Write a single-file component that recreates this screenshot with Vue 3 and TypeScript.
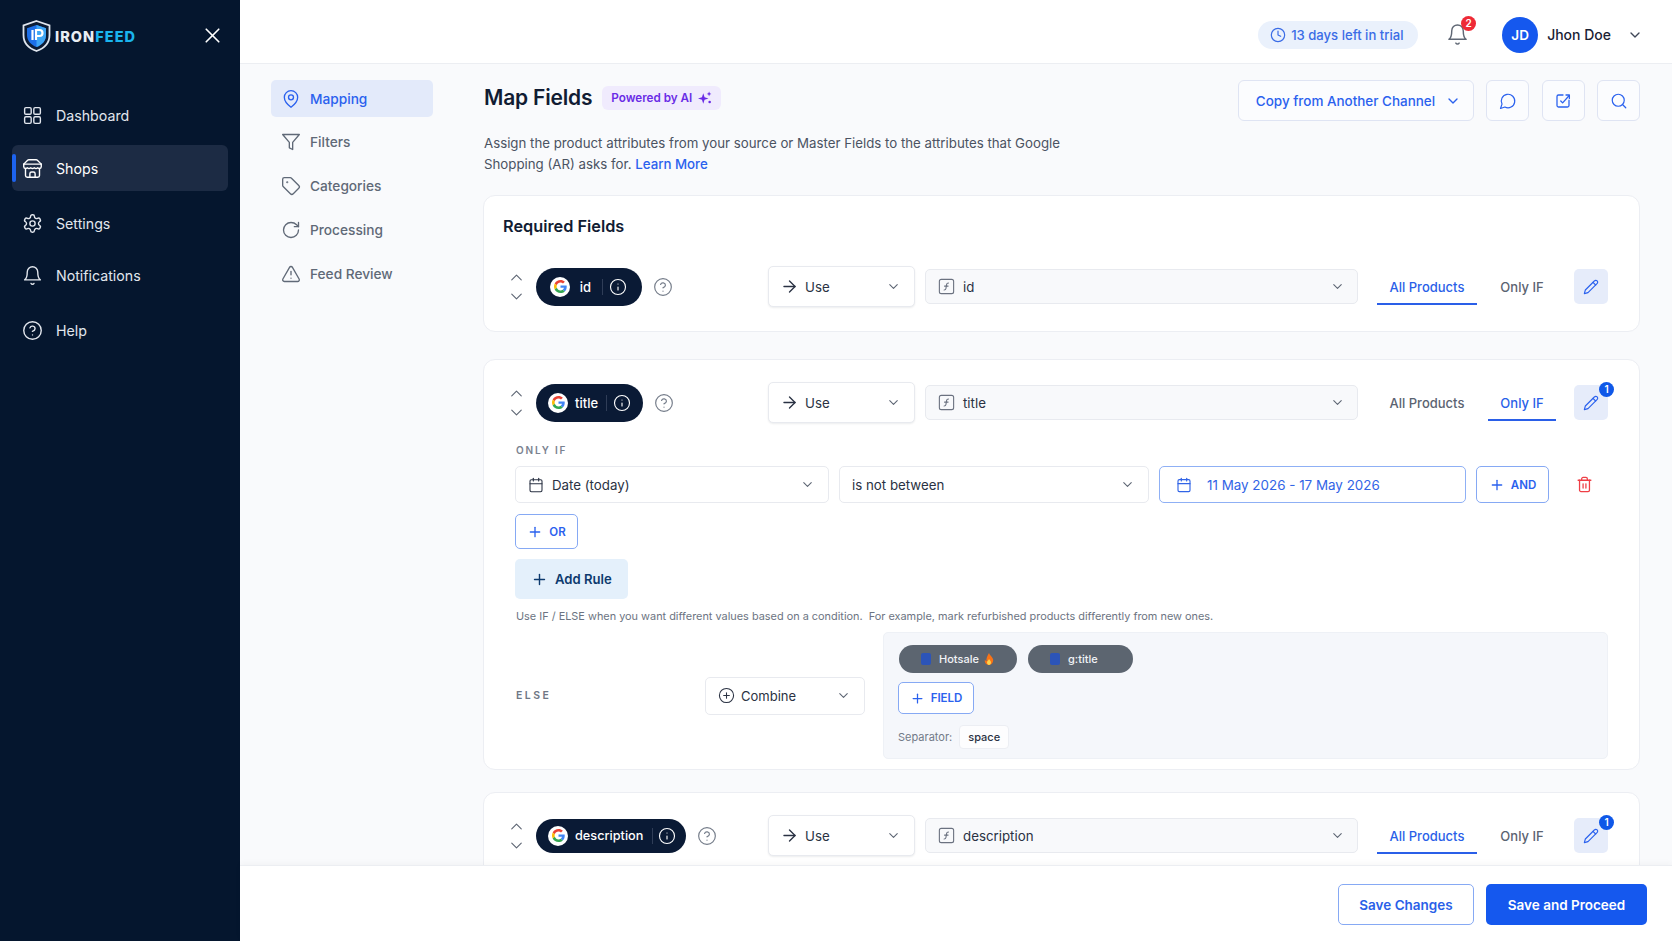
<script setup lang="ts">
import { h } from 'vue'

const icons: Record<string, string> = {
  grid: '<rect x="3" y="3" width="7.5" height="7.5" rx="1.5"/><rect x="13.5" y="3" width="7.5" height="7.5" rx="1.5"/><rect x="13.5" y="13.5" width="7.5" height="7.5" rx="1.5"/><rect x="3" y="13.5" width="7.5" height="7.5" rx="1.5"/>',
  store: '<path d="m2 7 4.41-4.41A2 2 0 0 1 7.83 2h8.34a2 2 0 0 1 1.42.59L22 7"/><path d="M4 12v8a2 2 0 0 0 2 2h12a2 2 0 0 0 2-2v-8"/><path d="M15 22v-4a2 2 0 0 0-2-2h-2a2 2 0 0 0-2 2v4"/><path d="M2 7h20"/><path d="M22 7v3a2 2 0 0 1-2 2 2.7 2.7 0 0 1-1.59-.63.7.7 0 0 0-.82 0A2.7 2.7 0 0 1 16 12a2.7 2.7 0 0 1-1.59-.63.7.7 0 0 0-.82 0A2.7 2.7 0 0 1 12 12a2.7 2.7 0 0 1-1.59-.63.7.7 0 0 0-.82 0A2.7 2.7 0 0 1 8 12a2.7 2.7 0 0 1-1.59-.63.7.7 0 0 0-.82 0A2.7 2.7 0 0 1 4 12a2 2 0 0 1-2-2V7"/>',
  settings: '<path d="M12.22 2h-.44a2 2 0 0 0-2 2v.18a2 2 0 0 1-1 1.73l-.43.25a2 2 0 0 1-2 0l-.15-.08a2 2 0 0 0-2.73.73l-.22.38a2 2 0 0 0 .73 2.73l.15.1a2 2 0 0 1 1 1.72v.51a2 2 0 0 1-1 1.74l-.15.09a2 2 0 0 0-.73 2.73l.22.38a2 2 0 0 0 2.73.73l.15-.08a2 2 0 0 1 2 0l.43.25a2 2 0 0 1 1 1.73V20a2 2 0 0 0 2 2h.44a2 2 0 0 0 2-2v-.18a2 2 0 0 1 1-1.73l.43-.25a2 2 0 0 1 2 0l.15.08a2 2 0 0 0 2.73-.73l.22-.39a2 2 0 0 0-.73-2.73l-.15-.08a2 2 0 0 1-1-1.74v-.5a2 2 0 0 1 1-1.74l.15-.09a2 2 0 0 0 .73-2.73l-.22-.38a2 2 0 0 0-2.73-.73l-.15.08a2 2 0 0 1-2 0l-.43-.25a2 2 0 0 1-1-1.73V4a2 2 0 0 0-2-2z"/><circle cx="12" cy="12" r="3"/>',
  bell: '<path d="M6 8a6 6 0 0 1 12 0c0 7 3 9 3 9H3s3-2 3-9"/><path d="M10.3 21a1.94 1.94 0 0 0 3.4 0"/>',
  help: '<circle cx="12" cy="12" r="10"/><path d="M9.09 9a3 3 0 0 1 5.83 1c0 2-3 3-3 3"/><path d="M12 17h.01"/>',
  pin: '<path d="M20 10c0 6-8 12-8 12s-8-6-8-12a8 8 0 0 1 16 0Z"/><circle cx="12" cy="10" r="3"/>',
  filter: '<polygon points="22 3 2 3 10 12.46 10 19 14 21 14 12.46 22 3"/>',
  tag: '<path d="M12.586 2.586A2 2 0 0 0 11.172 2H4a2 2 0 0 0-2 2v7.172a2 2 0 0 0 .586 1.414l8.704 8.704a2.426 2.426 0 0 0 3.42 0l6.58-6.58a2.426 2.426 0 0 0 0-3.42z"/><circle cx="7.5" cy="7.5" r=".5"/>',
  rotate: '<path d="M21 12a9 9 0 1 1-9-9c2.52 0 4.93 1 6.74 2.74L21 8"/><path d="M21 3v5h-5"/>',
  alert: '<path d="m21.73 18-8-14a2 2 0 0 0-3.48 0l-8 14A2 2 0 0 0 4 21h16a2 2 0 0 0 1.73-3"/><path d="M12 9v4"/><path d="M12 17h.01"/>',
  x: '<path d="M18 6 6 18"/><path d="m6 6 12 12"/>',
  down: '<path d="m6 9 6 6 6-6"/>',
  up: '<path d="m18 15-6-6-6 6"/>',
  clock: '<circle cx="12" cy="12" r="10"/><path d="M12 6v6l4 2"/>',
  message: '<path d="M7.9 20A9 9 0 1 0 4 16.1L2 22Z"/>',
  check: '<path d="M12 4H6a2 2 0 0 0-2 2v12a2 2 0 0 0 2 2h12a2 2 0 0 0 2-2v-7"/><path d="m9 12 2.5 2.5L20 5"/><path d="M16 4h4.5v4.5"/>',
  search: '<circle cx="11" cy="11" r="8"/><path d="m21 21-4.3-4.3"/>',
  arrow: '<path d="M5 12h14"/><path d="m12 5 7 7-7 7"/>',
  info: '<circle cx="12" cy="12" r="10"/><path d="M12 16v-4"/><path d="M12 8h.01"/>',
  func: '<rect x="3" y="3" width="18" height="18" rx="2.5"/><path d="M14.5 7.5c-1.6 0-2.2.7-2.4 2l-.8 5c-.2 1.3-.8 2-2.3 2"/><path d="M9.5 11.5h4.5"/>',
  pencil: '<path d="M17 3a2.85 2.83 0 1 1 4 4L7.5 20.5 2 22l1.5-5.5Z"/><path d="m15 5 4 4"/>',
  calendar: '<path d="M8 2v4"/><path d="M16 2v4"/><rect x="3" y="4" width="18" height="18" rx="2"/><path d="M3 10h18"/>',
  plus: '<path d="M5 12h14"/><path d="M12 5v14"/>',
  trash: '<path d="M3 6h18"/><path d="M19 6v14c0 1-1 2-2 2H7c-1 0-2-1-2-2V6"/><path d="M8 6V4c0-1 1-2 2-2h4c1 0 2 1 2 2v2"/><path d="M10 11v6"/><path d="M14 11v6"/>',
  plusCircle: '<circle cx="12" cy="12" r="10"/><path d="M8 12h8"/><path d="M12 8v8"/>',
}

const Icon = (props: { name: string; size?: number; width?: number }) =>
  h('svg', {
    width: props.size ?? 18,
    height: props.size ?? 18,
    viewBox: '0 0 24 24',
    fill: 'none',
    stroke: 'currentColor',
    'stroke-width': props.width ?? 2,
    'stroke-linecap': 'round',
    'stroke-linejoin': 'round',
    style: 'flex:none;display:block',
    innerHTML: icons[props.name],
  })
Icon.props = ['name', 'size', 'width']

const mainNav = [
  { label: 'Dashboard', icon: 'grid' },
  { label: 'Shops', icon: 'store', active: true },
  { label: 'Settings', icon: 'settings' },
  { label: 'Notifications', icon: 'bell' },
  { label: 'Help', icon: 'help' },
]

const subNav = [
  { label: 'Mapping', icon: 'pin', active: true },
  { label: 'Filters', icon: 'filter' },
  { label: 'Categories', icon: 'tag' },
  { label: 'Processing', icon: 'rotate' },
  { label: 'Feed Review', icon: 'alert' },
]

const cards = [
  { key: 'id', field: 'id', heading: 'Required Fields', tab: 'all', count: false, rules: false },
  { key: 'title', field: 'title', heading: '', tab: 'if', count: true, rules: true },
  { key: 'description', field: 'description', heading: '', tab: 'all', count: true, rules: false },
]
</script>

<template>
  <div class="app">
    <aside class="sidebar">
      <div class="brand">
        <svg class="shield" width="29" height="32" viewBox="0 0 29 32">
          <path d="M14.5 1 27.5 5.5V15c0 8-5.5 13.5-13 16C7 28.5 1.500 23 1.500 15V5.500Z" fill="#0c1b33" stroke="#dfe5ee" stroke-width="1.800"/>
          <path d="M14.500 5 24 8.200V15c0 5.800-4 10-9.500 12C9 25 5 20.800 5 15V8.200Z" fill="#1d6fe8"/>
          <path d="M14.500 5 24 8.200V15c0 5.800-4 10-9.500 12Z" fill="#3ea6f5"/>
          <path d="M10.500 10v10M14 20V10h3.500a2.800 2.800 0 0 1 0 6H14" fill="none" stroke="#fff" stroke-width="2.200"/>
        </svg>
        <span class="wordmark">IRON<em>FEED</em></span>
        <Icon class="close" name="x" :size="25" :width="1.6" />
      </div>
      <nav class="main-nav">
        <a v-for="item in mainNav" :key="item.label" class="main-link" :class="{ active: item.active }">
          <Icon :name="item.icon" :size="21" :width="1.6" />
          <span>{{ item.label }}</span>
        </a>
      </nav>
    </aside>

    <div class="workspace">
      <header class="topbar">
        <div class="trial"><Icon name="clock" :size="16" :width="1.8" />13 days left in trial</div>
        <div class="bell">
          <Icon name="bell" :size="23" :width="1.5" />
          <span class="bell-count">2</span>
        </div>
        <div class="avatar">JD</div>
        <span class="user-name">Jhon Doe</span>
        <Icon class="user-chevron" name="down" :size="16" />
      </header>

      <div class="scroll">
        <nav class="sub-nav">
          <a v-for="item in subNav" :key="item.label" class="sub-link" :class="{ active: item.active }">
            <Icon :name="item.icon" :size="20" :width="1.6" />
            <span>{{ item.label }}</span>
          </a>
        </nav>

        <main class="content">
          <div class="page-head">
            <div class="page-intro">
              <div class="title-row">
                <h1>Map Fields</h1>
                <span class="ai-badge">
                  Powered by AI
                  <svg width="14" height="14" viewBox="0 0 24 24" fill="currentColor">
                    <path d="M9 4l2.200 6.800L18 13l-6.800 2.200L9 22l-2.200-6.800L0 13l6.800-2.200z"/>
                    <path d="M19 1l1.200 2.800L23 5l-2.800 1.200L19 9l-1.200-2.800L15 5l2.800-1.200z"/>
                    <circle cx="20" cy="19" r="2.200"/>
                  </svg>
                </span>
              </div>
              <p class="intro">
                Assign the product attributes from your source or Master Fields to the attributes that Google
                Shopping (AR) asks for. <a>Learn More</a>
              </p>
            </div>
            <div class="page-actions">
              <button class="ghost copy">Copy from Another Channel <Icon name="down" :size="16" /></button>
              <button class="ghost square"><Icon name="message" :size="18" :width="1.6" /></button>
              <button class="ghost square"><Icon name="check" :size="18" :width="1.7" /></button>
              <button class="ghost square"><Icon name="search" :size="18" :width="1.6" /></button>
            </div>
          </div>

          <section v-for="card in cards" :key="card.key" class="card" :class="`card-${card.key}`">
            <h2 v-if="card.heading">{{ card.heading }}</h2>

            <div class="field-row">
              <div class="field-name">
                <div class="reorder">
                  <Icon name="up" :size="19" :width="1.4" />
                  <Icon name="down" :size="19" :width="1.4" />
                </div>
                <div class="pill" :class="`pill-${card.key}`">
                  <span class="g-mark">
                    <svg width="13" height="13" viewBox="0 0 48 48">
                      <path fill="#EA4335" d="M24 9.500c3.540 0 6.710 1.220 9.210 3.600l6.850-6.850C35.900 2.380 30.470 0 24 0 14.620 0 6.510 5.380 2.560 13.220l7.980 6.190C12.430 13.720 17.740 9.500 24 9.500z"/>
                      <path fill="#4285F4" d="M46.980 24.550c0-1.570-.15-3.090-.38-4.550H24v9.020h12.940c-.58 2.960-2.260 5.480-4.780 7.180l7.730 6c4.510-4.180 7.090-10.360 7.090-17.650z"/>
                      <path fill="#FBBC05" d="M10.530 28.590c-.48-1.450-.76-2.990-.76-4.590s.27-3.140.76-4.590l-7.980-6.190C.92 16.460 0 20.120 0 24c0 3.880.92 7.540 2.560 10.780l7.970-6.190z"/>
                      <path fill="#34A853" d="M24 48c6.480 0 11.930-2.130 15.890-5.810l-7.730-6c-2.150 1.450-4.920 2.300-8.160 2.300-6.260 0-11.570-4.220-13.470-9.910l-7.980 6.190C6.510 42.620 14.620 48 24 48z"/>
                    </svg>
                  </span>
                  <span class="pill-text">{{ card.field }}</span>
                  <i class="pill-divider"></i>
                  <Icon name="info" :size="18" :width="1.5" />
                </div>
                <Icon class="field-help" name="help" :size="20" :width="1.4" />
              </div>

              <div class="select use-select">
                <Icon name="arrow" :size="19" :width="1.7" />
                <span>Use</span>
                <Icon class="caret" name="down" :size="15" :width="1.7" />
              </div>
              <div class="select source-select">
                <Icon class="func" name="func" :size="19" :width="1.4" />
                <span>{{ card.field }}</span>
                <Icon class="caret" name="down" :size="15" :width="1.7" />
              </div>

              <div class="tabs">
                <span class="tab tab-all" :class="{ on: card.tab === 'all' }">All Products</span>
                <span class="tab tab-if" :class="{ on: card.tab === 'if' }">Only IF</span>
              </div>
              <button class="edit">
                <Icon name="pencil" :size="16" :width="1.7" />
                <span v-if="card.count" class="edit-count">1</span>
              </button>
            </div>

            <div v-if="card.rules" class="rules">
              <div class="only-if">ONLY IF</div>
              <div class="condition">
                <div class="select">
                  <Icon class="muted-icon" name="calendar" :size="16" :width="1.6" />
                  <span>Date (today)</span>
                  <Icon class="caret" name="down" :size="15" :width="1.7" />
                </div>
                <div class="select">
                  <span>is not between</span>
                  <Icon class="caret" name="down" :size="15" :width="1.7" />
                </div>
                <div class="select date-range">
                  <Icon name="calendar" :size="16" :width="1.7" />
                  <span>11 May 2026 - 17 May 2026</span>
                </div>
                <button class="outline"><Icon name="plus" :size="16" /> AND</button>
                <Icon class="trash" name="trash" :size="17" :width="1.8" />
              </div>
              <button class="outline or"><Icon name="plus" :size="16" /> OR</button>
              <button class="add-rule"><Icon name="plus" :size="17" />Add Rule</button>
              <p class="hint">Use IF / ELSE when you want different values based on a condition.&nbsp; For example, mark refurbished products differently from new ones.</p>
              <div class="else-row">
                <span class="else-label">ELSE</span>
                <div class="select combine">
                  <Icon name="plusCircle" :size="17" :width="1.5" />
                  <span>Combine</span>
                  <Icon class="caret" name="down" :size="15" :width="1.7" />
                </div>
                <div class="else-panel">
                  <div class="chips">
                    <span class="chip chip-hotsale">
                      <i class="chip-icon"></i>Hotsale
                      <svg width="10" height="12" viewBox="0 0 10 12">
                        <path d="M5 0c.5 2 3 3.500 4 6 .8 3-1.500 6-4 6S0 9.500 1 6.500c.4 1 1 1.500 1.500 1.500C2 5 3.500 3 5 0z" fill="#f97316"/>
                        <path d="M5 6c.5 1 2 2 2 3.500S6 12 5 12s-2-1-2-2.500S4.500 7.500 5 6z" fill="#fcd34d"/>
                      </svg>
                    </span>
                    <span class="chip chip-gtitle"><i class="chip-icon"></i>g:title</span>
                  </div>
                  <button class="outline field-btn"><Icon name="plus" :size="15" /> FIELD</button>
                  <div class="separator">Separator: <span>space</span></div>
                </div>
              </div>
            </div>
          </section>
        </main>
      </div>

      <footer class="footer">
        <button class="save-secondary">Save Changes</button>
        <button class="save-primary">Save and Proceed</button>
      </footer>
    </div>
  </div>
</template>

<style>
html, body { margin: 0; height: 100%; overflow: hidden; }
</style>

<style scoped>
* { box-sizing: border-box; }
.app {
  display: flex;
  height: 100vh;
  font-family: Inter, "Noto Sans", sans-serif;
  color: #111c33;
  background: #f9fafc;
}
button { font-family: inherit; cursor: pointer; }

.sidebar { width: 240px; flex: none; background: #05162e; color: #e6eaf1; }
.brand { display: flex; align-items: center; height: 72px; padding: 0 0 0 22px; }
.wordmark { margin-left: 4px; width: 81px; font-size: 14.500px; font-weight: 800; letter-spacing: 1.050px; white-space: nowrap; color: #e9edf3; }
.wordmark em { font-style: normal; color: #1ab4ee; }
.close { margin-left: 64px; margin-top: -2px; color: #fff; }
.main-nav { display: flex; flex-direction: column; padding: 20px 12px 0; }
.main-link {
  display: flex; align-items: center; gap: 13px;
  height: 46px; margin-bottom: 7px; padding-left: 10px;
  font-size: 14.200px; color: #e2e6ed; border-radius: 6px;
}
.main-link:nth-child(2) { margin-bottom: 9px; }
.main-link:nth-child(3) { margin-bottom: 6px; }
.main-link:nth-child(4) { margin-bottom: 9px; }
.main-link.active {
  background: #1c2b44; color: #fff; position: relative;
}
.main-link.active::before {
  content: ""; position: absolute; left: 0; top: 9px; bottom: 9px; width: 4px;
  background: #1d63ee; border-radius: 2px;
}

.workspace { flex: 1; min-width: 0; display: flex; flex-direction: column; }
.topbar {
  height: 64px; flex: none; display: flex; align-items: center; padding: 6px 29px 0 0;
  justify-content: flex-end; background: #fff; border-bottom: 1px solid #eceef2;
}
.trial {
  display: flex; align-items: center; gap: 5px; height: 28px; width: 160px; padding-left: 12px;
  border-radius: 14px; background: #eaf1fc; color: #3a6ce6; font-size: 13.100px; font-weight: 500;
}
.bell { position: relative; margin-left: 28px; color: #5f6774; }
.bell-count {
  position: absolute; right: -7px; top: -7px; width: 15px; height: 15px; border-radius: 50%;
  background: #ee2a36; color: #fff; font-size: 10px; font-weight: 600; line-height: 15px; text-align: center;
}
.avatar {
  width: 36px; height: 36px; margin-left: 33px; border-radius: 50%; background: #1558ee;
  color: #fff; font-size: 13.500px; font-weight: 600; line-height: 36px; text-align: center;
}
.user-name { margin-left: 9px; font-size: 14px; font-weight: 500; color: #1a2234; }
.user-chevron { margin-left: 16px; color: #3f4757; }

.scroll { flex: 1; min-height: 0; overflow: hidden; display: flex; padding: 16px 32px 0 31px; align-items: flex-start; }
.sub-nav { width: 162px; flex: none; display: flex; flex-direction: column; gap: 6.750px; }
.sub-link {
  display: flex; align-items: center; gap: 9px; height: 37px; padding-left: 10px;
  color: #606977; font-size: 13.700px; font-weight: 500; border-radius: 5px;
}
.sub-link.active { background: #e3eafa; color: #2a61ee; }

.content { flex: 1; min-width: 0; margin-left: 50px; }
.page-head { display: flex; justify-content: space-between; align-items: flex-start; }
.page-intro { padding-left: 1px; }
.title-row { display: flex; align-items: center; gap: 10px; height: 34px; }
h1 { margin: 0; font-size: 21px; font-weight: 600; letter-spacing: -.2px; color: #111c33; }
.ai-badge {
  display: inline-flex; align-items: center; gap: 6px; height: 24px; margin-top: 2px; padding: 0 9px;
  border-radius: 6px; background: #f0ebfd; color: #6a2be6; font-size: 11.700px; font-weight: 600;
}
.intro { margin: 19px 0 0; width: 590px; font-size: 13.280px; line-height: 21px; color: #4b5362; }
.intro a { color: #2a61ee; font-weight: 500; }
.page-actions { display: flex; gap: 12.500px; }
.ghost {
  height: 41px; display: flex; align-items: center; justify-content: center; gap: 10px;
  border: 1px solid #dfe4f3; border-radius: 6px; background: #fbfcfe; color: #2a61ee;
}
.copy { width: 236px; padding: 0 0 0 6px; font-size: 13.460px; font-weight: 500; }
.square { width: 43px; padding: 0; }

.card {
  margin-top: 22px; background: #fff; border: 1px solid #eceef3; border-radius: 12px;
  padding: 22px 31px 22px 23px;
}
.card-id { margin-top: 20px; padding-top: 18px; padding-bottom: 24px; }
.card-title { margin-top: 27px; padding-top: 22px; padding-bottom: 10px; }
h2 { margin: 0 0 28px -4px; font-size: 16.300px; line-height: 24px; font-weight: 600; color: #111c33; }

.field-row { display: flex; align-items: center; height: 41px; }
.field-name { display: flex; align-items: center; width: 261px; flex: none; }
.reorder { display: flex; flex-direction: column; width: 18px; align-items: center; color: #5d6573; }
.pill {
  display: flex; align-items: center; height: 38px; margin-left: 11px; padding: 0 12px;
  border-radius: 19px; background: #0a1a35; color: #fff; font-size: 13px; font-weight: 500;
}
.pill-id { padding: 0 15px 0 14px; }
.pill-description { height: 34px; padding-right: 10px; font-size: 12.700px; }
.pill-description .pill-text { margin-right: 9px; }
.pill-description .pill-divider { margin-right: 5px; }
.g-mark {
  width: 20px; height: 20px; border-radius: 50%; background: #fff;
  display: flex; align-items: center; justify-content: center;
}
.pill-text { margin: 0 8px 0 7px; }
.pill-id .pill-text { min-width: 17px; text-align: center; }
.pill-divider { width: 1px; height: 16px; background: #2f3d57; margin-right: 6px; }
.field-help { margin-left: 11px; color: #747c89; }

.select {
  display: flex; align-items: center; gap: 8px; height: 37px; padding: 0 13px 0 12px;
  border: 1px solid #e8eaef; border-radius: 5px; background: #fff; font-size: 13.300px; color: #2a3243;
}
.caret { margin-left: auto; color: #5d6573; }
.use-select { width: 147px; height: 41px; padding: 0 13px 0 11px; gap: 6px; box-shadow: 0 1px 2px rgba(16, 24, 40, .08); }
.source-select { flex: 1; min-width: 0; margin-left: 10px; height: 35px; padding: 0 12px 0 11px; gap: 7px; background: #f8f9fb; }
.func { color: #6b7280; }
.tabs { display: flex; gap: 11px; margin-left: 19px; height: 37px; }
.tab {
  height: 37px; line-height: 39px; border-bottom: 2px solid transparent; text-align: center;
  font-size: 13px; font-weight: 500; color: #5b6371;
}
.tab-all { width: 100px; }
.tab-if { width: 68px; }
.tab.on { color: #2a5fe8; border-color: #2a5fe8; }
.edit {
  position: relative; width: 34px; height: 35px; margin-left: 18px; border: 0; border-radius: 5px;
  background: #e6ecfa; color: #2a61ee; display: flex; align-items: center; justify-content: center;
}
.edit-count {
  position: absolute; right: -6px; top: -3px; width: 15px; height: 15px; border-radius: 50%;
  background: #0f58e8; color: #fff; font-size: 10px; font-weight: 600; line-height: 15px;
}

.rules { margin-left: 8px; }
.only-if { margin-top: 20px; padding-left: 1px; font-size: 10px; line-height: 14px; font-weight: 600; letter-spacing: 1.800px; color: #7a8290; }
.condition { display: grid; grid-template-columns: 314px 310px 307px 73px 1fr; gap: 10px; margin-top: 9px; align-items: center; }
.date-range { gap: 15px; padding-left: 16px; font-size: 13.400px; border-color: #8fb0f5; color: #3164e6; }
.outline {
  display: flex; align-items: center; justify-content: center; gap: 6px; height: 37px; padding: 0;
  border: 1px solid #86a9f4; border-radius: 5px; background: #fff; color: #2a61ee;
  font-size: 11.500px; font-weight: 600;
}
.trash { color: #ef3f46; margin-left: 17px; }
.or { width: 63px; height: 35px; margin-top: 11px; }
.add-rule {
  display: flex; align-items: center; gap: 7px; width: 113px; height: 40px; margin-top: 10px; padding: 0 0 0 16px;
  border: 0; border-radius: 5px; background: #e4f0fb; color: #0d3a6e; font-size: 13.100px; font-weight: 600;
}
.hint { margin: 9px 0 0; padding-left: 1px; font-size: 10.900px; line-height: 16px; color: #6c7482; }
.else-row { display: flex; align-items: center; margin-top: 8px; }
.else-label { width: 190px; flex: none; padding-left: 1px; font-size: 10.500px; font-weight: 600; letter-spacing: 2.500px; color: #6f7785; }
.combine { width: 160px; height: 38px; flex: none; gap: 6px; font-size: 13px; }
.else-panel {
  flex: 1; min-width: 0; margin-left: 18px; padding: 12px 15px 9px 14px;
  background: #f5f7fb; border: 1px solid #eef1f6; border-radius: 5px;
}
.chips { display: flex; gap: 11px; margin-left: 1px; }
.chip {
  display: flex; align-items: center; gap: 5px; height: 28px; border-radius: 14px; background: #5c6570;
  color: #f1f3f6; font-size: 11px; font-weight: 500; padding-left: 22px;
}
.chip-hotsale { width: 118px; }
.chip-gtitle { width: 105px; }
.chip-icon { width: 10px; height: 12px; background: #2c54b8; border-radius: 2px; margin-right: 3px; }
.field-btn { width: 76px; height: 32px; margin-top: 9px; }
.separator { display: flex; align-items: center; gap: 7px; margin-top: 11px; font-size: 11px; color: #727a88; }
.separator span {
  width: 50px; height: 24px; line-height: 22px; text-align: center; background: #fdfdfe;
  border: 1px solid #eceef3; border-radius: 4px; color: #2a3243; font-weight: 500;
}

.footer {
  height: 76px; flex: none; display: flex; justify-content: flex-end; align-items: flex-start; gap: 12px;
  padding: 18px 25px 0 0; background: #fff; border-top: 1px solid #eceef2;
  position: relative; box-shadow: 0 -2px 6px rgba(16, 24, 40, .03);
}
.save-secondary, .save-primary { height: 41px; border-radius: 5px; font-size: 13.500px; font-weight: 600; }
.save-secondary { width: 136px; background: #fff; border: 1.500px solid #86a9f4; color: #2a5fe8; }
.save-primary { width: 161px; background: #1558ee; border: 0; color: #fff; }
</style>
